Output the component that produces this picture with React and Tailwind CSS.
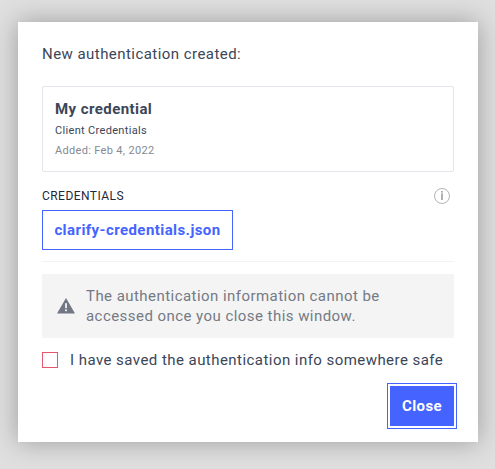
import { useState } from "react";

const InfoIcon = () => (
  <svg width="16" height="16" viewBox="0 0 16 16" fill="none">
    <circle cx="8" cy="8" r="7.5" stroke="#b4b4b4" />
    <rect x="7" y="3" width="2" height="1.6" fill="#b0b0b0" />
    <rect x="7" y="5.4" width="2" height="6.6" fill="#b0b0b0" />
  </svg>
);

const WarningIcon = () => (
  <svg width="18" height="16" viewBox="0 0 18 16">
    <path d="M9 0L18 15.5H0L9 0Z" fill="#717884" />
    <rect x="8.1" y="5.2" width="1.8" height="5" fill="#f4f4f4" />
    <rect x="8.1" y="11.4" width="1.8" height="1.8" fill="#f4f4f4" />
  </svg>
);

const App = () => {
  const [saved, setSaved] = useState(false);

  return (
    <div className="h-[469px] bg-[#dfdfdf] px-[18px] pt-[22px] font-['Roboto',sans-serif] text-[#3b4658]">
      <div className="w-[460px] h-[420px] bg-white p-6 shadow-[0_0_24px_rgba(0,0,0,0.3)]">
        <h2 className="h-10 text-[15px] leading-4 tracking-[0.45px]">
          New authentication created:
        </h2>

        {/* ===== CREDENTIAL CARD ===== */}
        <div className="h-[86px] rounded-xs border border-[#e5e5ec] px-3 pt-3">
          <p className="text-[15px] leading-5 font-bold tracking-[0.43px]">My credential</p>
          <p className="mt-[2px] text-[11px] leading-5 tracking-[0.33px]">Client Credentials</p>
          <p className="text-[11px] leading-5 tracking-[0.33px] text-[#858a94]">
            Added: Feb 4, 2022
          </p>
        </div>

        {/* ===== DOWNLOAD ===== */}
        <div className="flex h-[38px] items-start justify-between pt-4 pr-1">
          <span className="text-xs leading-4 tracking-[0.45px] text-[#1f2937]">CREDENTIALS</span>
          <InfoIcon />
        </div>
        <button className="block h-10 w-[191px] border border-[#4463ff] text-[15px] font-bold tracking-[0.43px] text-[#4463ff]">
          clarify-credentials.json
        </button>

        {/* ===== NOTICE ===== */}
        <div className="mt-[11px] border-t border-[#f3f3f3] pt-3">
          <div className="flex h-16 items-center gap-[11px] bg-[#f4f4f4] pl-[15px] text-[#747a84]">
            <WarningIcon />
            <p className="w-[320px] text-[15px] leading-5 tracking-[0.45px]">
              The authentication information cannot be accessed once you close this window.
            </p>
          </div>
        </div>

        <label className="mt-3 flex h-5 items-center gap-3 text-[15px] tracking-[0.45px] whitespace-nowrap">
          <input
            type="checkbox"
            checked={saved}
            onChange={(e) => setSaved(e.target.checked)}
            className="size-4 shrink-0 appearance-none border border-[#e8566e] checked:bg-[#e8566e]"
          />
          I have saved the authentication info somewhere safe
        </label>

        <div className="mt-4 flex justify-end">
          <button className="h-10 w-16 bg-[#4463ff] text-[15px] font-bold tracking-[0.43px] text-white outline outline-offset-2 outline-[#4463ff]">
            Close
          </button>
        </div>
      </div>
    </div>
  );
};

export default App;
